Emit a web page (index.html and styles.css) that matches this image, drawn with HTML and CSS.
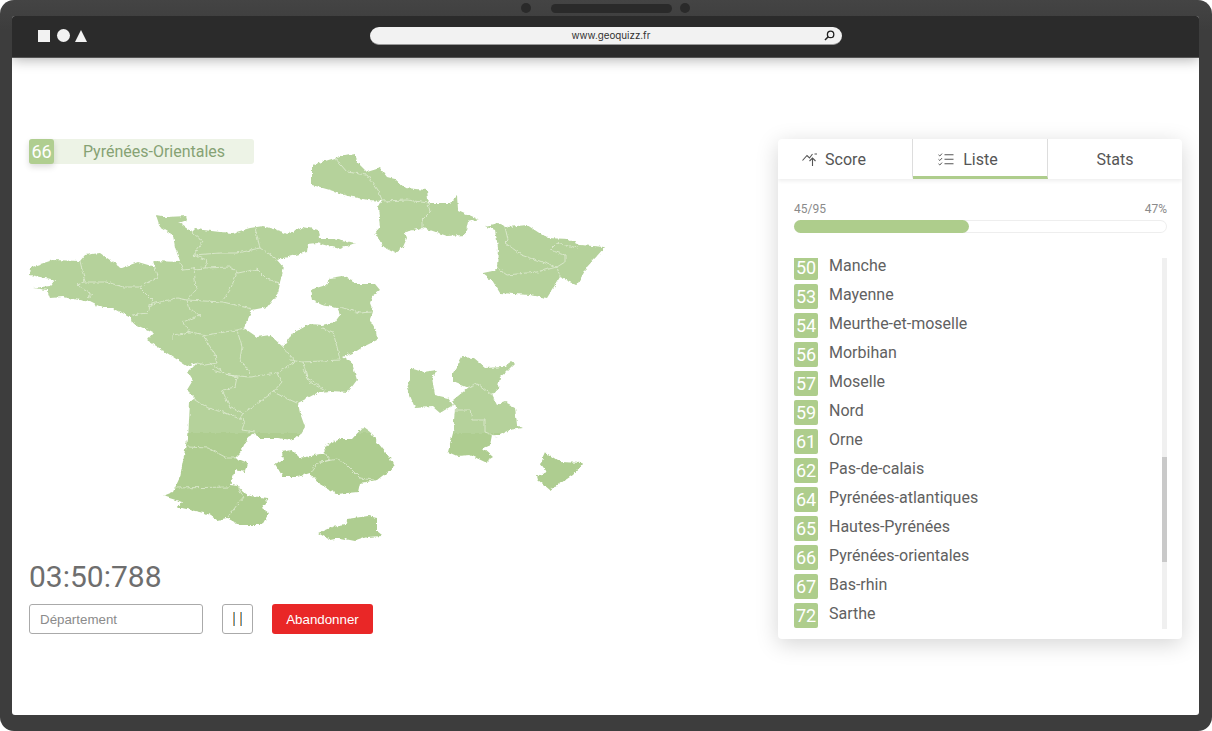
FILE: index.html
```html
<!DOCTYPE html>
<html lang="fr">

<head>
  <meta charset="UTF-8">
  <meta name="viewport" content="width=device-width, initial-scale=1">
  <title>GeoQuizz</title>
  <link rel="stylesheet" href="styles.css">
</head>

<body>
  <div class="frame">
    <div class="notch">
      <span class="cam"></span>
      <span class="speaker"></span>
      <span class="cam cam-right"></span>
    </div>

    <div class="screen">
      <div class="toolbar">
        <div class="shapes">
          <span class="shape-square"></span>
          <span class="shape-circle"></span>
          <span class="shape-triangle"></span>
        </div>
        <div class="address">
          <span>www.geoquizz.fr</span>
          <svg class="address-search" width="11" height="11" viewBox="0 0 11 11">
            <circle cx="6.6" cy="4.4" r="3.2" fill="none" stroke="#222" stroke-width="1.3" />
            <path d="M4.2 6.8 1 10" stroke="#222" stroke-width="1.5" fill="none" />
          </svg>
        </div>
      </div>

      <div class="game">
        <div class="left">
          <div class="map-wrap">
            <div class="current">
              <span class="current-num">66</span>
              <span class="current-name">Pyrénées-Orientales</span>
            </div>
            <svg class="map" width="600" height="410" viewBox="29 139 600 410">
              <defs>
                <linearGradient id="land" gradientUnits="userSpaceOnUse" x1="0" y1="139" x2="0" y2="549">
                  <stop offset="0.718" stop-color="#b5d29b" />
                  <stop offset="0.718" stop-color="#aecd90" />
                </linearGradient>
                <filter id="rough" x="-5%" y="-5%" width="110%" height="110%">
                  <feTurbulence type="fractalNoise" baseFrequency="0.22" numOctaves="3" seed="4" />
                  <feDisplacementMap in="SourceGraphic" scale="4" xChannelSelector="R" yChannelSelector="G" />
                </filter>
              </defs>
              <g filter="url(#rough)">
                <g class="land">
                  <!-- ouest + centre -->
                  <polygon points="156,215 167,217 186,216 187,220 179,223 192,232 195,229 220,232 233,233 250,228 263,226 283,232 287,234 303,227 319,230 320,238 333,238 355,243 340,249 317,243 308,244 307,252 277,260 284,268 280,282 278,293 267,307 252,310 244,328 257,337 270,335 283,347 293,333 310,324 322,325 335,322 340,315 337,308 322,305 312,300 310,290 326,285 330,278 342,276 352,280 353,284 375,284 380,290 373,295 370,303 373,311 372,315 370,320 376,330 377,340 363,347 355,352 343,357 352,363 354,370 357,380 348,392 330,391 317,393 298,403 300,413 305,427 300,435 290,440 278,438 258,438 255,433 248,437 240,453 235,458 247,463 245,472 235,470 230,485 238,486 243,492 250,496 269,498 262,508 269,513 262,525 240,525 227,518 217,520 208,514 182,508 177,508 182,502 163,496 173,492 180,477 185,450 187,440 189,433 197,438 188,439 190,402 195,398 187,390 193,380 188,372 197,363 187,366 147,340 153,333 143,328 132,323 130,317 113,308 102,308 90,302 63,297 50,298 47,290 33,288 50,286 55,280 40,277 30,275 31,267 53,260 80,261 85,255 100,253 110,260 122,268 138,262 155,267 153,261 180,262 175,247 173,235 160,227" />
                  <!-- nord -->
                  <polygon points="312,165 335,158 355,154 358,163 367,172 380,168 387,177 395,179 405,188 427,190 428,199 427,203 450,203 457,196 458,210 478,219 468,222 465,235 447,236 430,230 422,228 405,232 407,238 403,247 395,253 383,247 378,237 374,234 380,227 378,208 382,201 368,200 348,196 330,190 312,185 312,173" />
                  <!-- est -->
                  <polygon points="485,226 498,223 508,227 527,225 547,238 568,239 580,245 605,247 587,267 577,285 560,277 547,298 530,295 500,293 492,280 483,273 497,270 498,247 495,230" />
                  <!-- rhone -->
                  <polygon points="453,373 462,357 473,358 485,368 503,367 512,361 515,363 505,373 500,377 498,388 492,395 497,405 505,402 515,407 517,425 523,428 510,430 500,435 492,435 490,445 483,448 493,457 485,462 470,455 457,456 448,452 453,433 455,408 453,400 468,388 453,382" />
                  <polygon points="410,368 423,372 437,370 432,378 435,395 448,398 453,405 440,413 433,407 415,408 407,388 410,380" />
                  <polygon points="545,452 560,462 583,463 573,475 550,490 538,480 537,476 547,472 540,463" />
                  <polygon points="282,452 292,450 300,458 325,453 324,447 340,439 352,439 363,427 370,432 378,443 390,458 394,467 377,480 360,483 358,492 337,494 318,483 310,473 297,477 283,477 275,464 283,460" />
                  <polygon points="318,533 332,527 345,525 347,519 368,516 377,518 377,532 382,536 367,537 355,541 340,538 330,540" />
                </g>
                <g class="borders">
                  <polyline points="192,232 203,242 193,255 207,260 205,268" />
                  <polyline points="255,228 260,248" />
                  <polyline points="193,255 220,253 237,253 260,248 277,260" />
                  <polyline points="205,268 230,267 238,273 257,269 267,279 280,283" />
                  <polyline points="180,263 183,270 205,268" />
                  <polyline points="194,268 196,290 187,300" />
                  <polyline points="237,273 230,290 223,300" />
                  <polyline points="148,305 177,298 187,300 223,302 252,309" />
                  <polyline points="80,261 85,282 77,285 92,295 88,298" />
                  <polyline points="85,282 107,282 123,287 140,287 157,277 155,267" />
                  <polyline points="140,288 152,300 148,313 132,315" />
                  <polyline points="187,300 190,310 200,315 183,322 190,332 173,335 173,340" />
                  <polyline points="190,332 207,335 237,330 244,328" />
                  <polyline points="203,335 215,355 217,363 205,365 197,363" />
                  <polyline points="237,330 242,347 240,360 250,373" />
                  <polyline points="210,363 227,375 250,377 277,373 295,362 283,348" />
                  <polyline points="193,398 208,408 223,412 240,419 243,413" />
                  <polyline points="212,370 237,377 235,387 222,390 230,407 243,413 260,402 273,392 282,382 278,373" />
                  <polyline points="273,392 297,403" />
                  <polyline points="303,370 310,382 327,392" />
                  <polyline points="240,419 245,420 242,430 255,432" />
                  <polyline points="187,447 208,448 227,458 235,458" />
                  <polyline points="175,488 230,487" />
                  <polyline points="238,486 243,497 228,517" />
                  <polyline points="325,453 330,460 317,463 311,472" />
                  <polyline points="317,463 337,459 347,465 360,478 373,480" />
                  <polyline points="335,158 347,172 367,175 378,190 382,200" />
                  <polyline points="382,201 407,200 428,203 430,212 422,220 422,228" />
                  <polyline points="322,328 333,332 337,347 340,360" />
                  <polyline points="290,360 303,362 340,360" />
                  <polyline points="303,362 307,377 323,388" />
                  <polyline points="340,307 360,313 372,312" />
                  <polyline points="505,227 508,240 505,243 522,255 557,267" />
                  <polyline points="497,268 507,275 537,272 557,267 565,262 565,255 550,250 557,243 578,248" />
                  <polyline points="557,267 560,277" />
                  <polyline points="455,410 470,410 472,420 485,420 485,432 498,437" />
                  <polyline points="468,388 478,384 492,395" />
                </g>
              </g>
            </svg>
          </div>

          <div class="timer">03:50:788</div>

          <div class="controls">
            <input class="dept-input" type="text" placeholder="Département">
            <button class="pause"><span class="bar"></span><span class="bar"></span></button>
            <button class="giveup">Abandonner</button>
          </div>
        </div>

        <div class="card">
          <div class="tabs">
            <div class="tab tab-icon">
              <svg width="16" height="14" viewBox="0 0 16 14">
                <path d="M.5 7.5 5 2.500l2.500 2.500L10.500 1M12.500 1l2.500 0" fill="none" stroke="#555" stroke-width="1.100" />
                <path d="M10.500 13V5.500M7.500 8l3-3 3 3" fill="none" stroke="#555" stroke-width="1.100" />
              </svg>
              <span>Score</span>
            </div>
            <div class="tab tab-icon tab-list tab-active">
              <svg width="16" height="13" viewBox="0 0 16 13">
                <path d="M.5 1.800 1.800 3 4 .6M.5 6.300 1.800 7.500 4 5.100M.5 10.800 1.800 12 4 9.600" fill="none" stroke="#555" stroke-width="1" />
                <path d="M6.500 1.800H15.500M6.500 6.300H15.500M6.500 10.800H15.500" fill="none" stroke="#555" stroke-width="1.100" />
              </svg>
              <span>Liste</span>
            </div>
            <div class="tab"><span>Stats</span></div>
          </div>

          <div class="progress">
            <div class="progress-labels"><span>45/95</span><span>47%</span></div>
            <div class="progress-track">
              <div class="progress-fill" style="width: 47%"></div>
            </div>
          </div>

          <div class="list-wrap">
            <ul class="list">
              <li><span class="num">50</span>Manche</li>
              <li><span class="num">53</span>Mayenne</li>
              <li><span class="num">54</span>Meurthe-et-moselle</li>
              <li><span class="num">56</span>Morbihan</li>
              <li><span class="num">57</span>Moselle</li>
              <li><span class="num">59</span>Nord</li>
              <li><span class="num">61</span>Orne</li>
              <li><span class="num">62</span>Pas-de-calais</li>
              <li><span class="num">64</span>Pyrénées-atlantiques</li>
              <li><span class="num">65</span>Hautes-Pyrénées</li>
              <li><span class="num">66</span>Pyrénées-orientales</li>
              <li><span class="num">67</span>Bas-rhin</li>
              <li><span class="num">72</span>Sarthe</li>
            </ul>
            <div class="scrollbar"><div class="scroll-thumb"></div></div>
          </div>
        </div>
      </div>
    </div>
  </div>
</body>

</html>
```

FILE: styles.css
```css
* {
  box-sizing: border-box;
}

body {
  margin: 0;
  background: #fff;
  font-family: 'Roboto', 'Liberation Sans', sans-serif;
  color: #555;
  overflow: hidden;
}

.frame {
  width: 1212px;
  height: 731px;
  padding: 0 13px 16px 12px;
  border-radius: 14px;
  background: linear-gradient(#444 0, #3d3d3d 30px);
  display: flex;
  flex-direction: column;
}

.notch {
  height: 16px;
  display: flex;
  align-items: center;
  justify-content: center;
}

.cam {
  width: 10px;
  height: 10px;
  border-radius: 50%;
  background: #2a2a2a;
}

.speaker {
  width: 121px;
  height: 9px;
  margin: 0 8px 0 20px;
  border-radius: 5px;
  background: #2a2a2a;
}

.screen {
  flex: 1;
  background: #fff;
  border-radius: 3px;
  overflow: hidden;
}

.toolbar {
  height: 42px;
  padding: 0 0 2px 26px;
  display: flex;
  align-items: center;
  background: #2b2b2b;
  border-bottom: 1px solid #555;
  box-shadow: 0 2px 12px rgba(0, 0, 0, 0.3);
  position: relative;
}

.shapes {
  width: 332px;
  display: flex;
  align-items: center;
  gap: 7px;
}

.shape-square {
  width: 12px;
  height: 12px;
  background: #f2f2f2;
}

.shape-circle {
  width: 13px;
  height: 13px;
  border-radius: 50%;
  background: #f2f2f2;
}

.shape-triangle {
  width: 0;
  height: 0;
  margin-left: -2px;
  border-left: 6.5px solid transparent;
  border-right: 6.5px solid transparent;
  border-bottom: 12px solid #f2f2f2;
}

.address {
  width: 472px;
  height: 18px;
  padding-left: 10px;
  position: relative;
  display: flex;
  align-items: center;
  justify-content: center;
  border-radius: 9px;
  background: #f2f2f2;
  border-bottom: 1px solid #999;
  font-family: 'Inter', 'Roboto', sans-serif;
  font-size: 9.800px;
  color: #333;
}

.address-search {
  position: absolute;
  right: 7px;
  top: 3px;
}

.game {
  padding: 81px 17px 0 17px;
  display: flex;
  justify-content: space-between;
}

.map-wrap {
  position: relative;
  height: 420px;
}

.map {
  display: block;
}

.land {
  fill: url(#land);
}

.borders {
  fill: none;
  stroke: #e6efdc;
  stroke-width: 0.700;
}

.current {
  position: absolute;
  left: 0;
  top: 0;
  width: 225px;
  height: 25px;
  display: flex;
  background: #edf3e6;
  border-radius: 3px;
  z-index: 1;
}

.current-num {
  width: 25px;
  display: flex;
  align-items: center;
  justify-content: center;
  background: #b0ce90;
  border-radius: 3px;
  color: #fff;
  font-size: 18px;
  box-shadow: 0 3px 6px rgba(0, 0, 0, 0.14);
}

.current-name {
  flex: 1;
  text-align: center;
  line-height: 25px;
  font-size: 16px;
  color: #86a274;
}

.timer {
  font-size: 30px;
  line-height: 35px;
  color: #6e6e6e;
}

.controls {
  margin-top: 10px;
  display: flex;
  gap: 19px;
}

.dept-input {
  width: 174px;
  height: 30px;
  padding: 0 10px;
  border: 1px solid #aaa;
  border-radius: 3px;
  background: #fff;
  font-family: 'Liberation Sans', Arial, sans-serif;
  font-size: 13.330px;
  outline: none;
}

.dept-input::placeholder {
  color: #8b8b8b;
}

.pause {
  width: 31px;
  height: 30px;
  padding: 0;
  display: flex;
  align-items: center;
  justify-content: center;
  gap: 5px;
  border: 1px solid #aaa;
  border-radius: 3px;
  background: #fff;
}

.bar {
  width: 2px;
  height: 14px;
  background: linear-gradient(90deg, #dc9c55 50%, #5b9ccb 50%);
}

.giveup {
  width: 101px;
  height: 30px;
  padding: 0;
  border: none;
  border-radius: 3px;
  background: #e92727;
  color: #fff;
  font-family: 'Liberation Sans', Arial, sans-serif;
  font-size: 13.330px;
}

.card {
  width: 404px;
  height: 500px;
  background: #fff;
  border-radius: 4px;
  box-shadow: 0 5px 22px rgba(0, 0, 0, 0.17);
  overflow: hidden;
}

.tabs {
  height: 40px;
  display: grid;
  grid-template-columns: 135px 135px 134px;
  box-shadow: 0 2px 4px rgba(0, 0, 0, 0.07);
  position: relative;
}

.tab {
  height: 40px;
  padding-top: 4px;
  display: flex;
  align-items: center;
  justify-content: center;
  font-size: 16px;
  color: #555;
  border-right: 1px solid #ddd;
  border-bottom: 3px solid transparent;
}

.tab:last-child {
  border-right: none;
}

.tab-icon {
  padding-right: 22px;
  gap: 7px;
}

.tab-list {
  padding-right: 24px;
  gap: 9px;
}

.tab-active {
  border-bottom-color: #aecd8c;
}

.progress {
  padding: 23px 15px 0 16px;
}

.progress-labels {
  display: flex;
  justify-content: space-between;
  font-size: 12px;
  line-height: 14px;
  color: #8a8a8a;
}

.progress-track {
  height: 13px;
  margin-top: 4px;
  border-radius: 7px;
  background: #fff;
  box-shadow: inset 0 0 0 1px #eee;
}

.progress-fill {
  height: 13px;
  border-radius: 7px;
  background: #aecd8c;
}

.list-wrap {
  height: 371px;
  margin-top: 25px;
  position: relative;
  overflow: hidden;
}

.list {
  margin: -3px 0 0;
  padding: 0 0 0 16px;
  list-style: none;
}

.list li {
  height: 29px;
  display: flex;
  font-size: 16px;
  line-height: 22px;
  color: #616161;
}

.num {
  width: 24px;
  height: 25px;
  margin-right: 11px;
  display: flex;
  align-items: center;
  justify-content: center;
  flex-shrink: 0;
  border-radius: 2px;
  background: #aecd8c;
  color: #fff;
  font-size: 18px;
}

.scrollbar {
  position: absolute;
  right: 15px;
  top: 0;
  width: 5px;
  height: 371px;
  background: #f0f0f0;
}

.scroll-thumb {
  width: 5px;
  height: 105px;
  margin-top: 199px;
  background: #c9c9c9;
}
```
